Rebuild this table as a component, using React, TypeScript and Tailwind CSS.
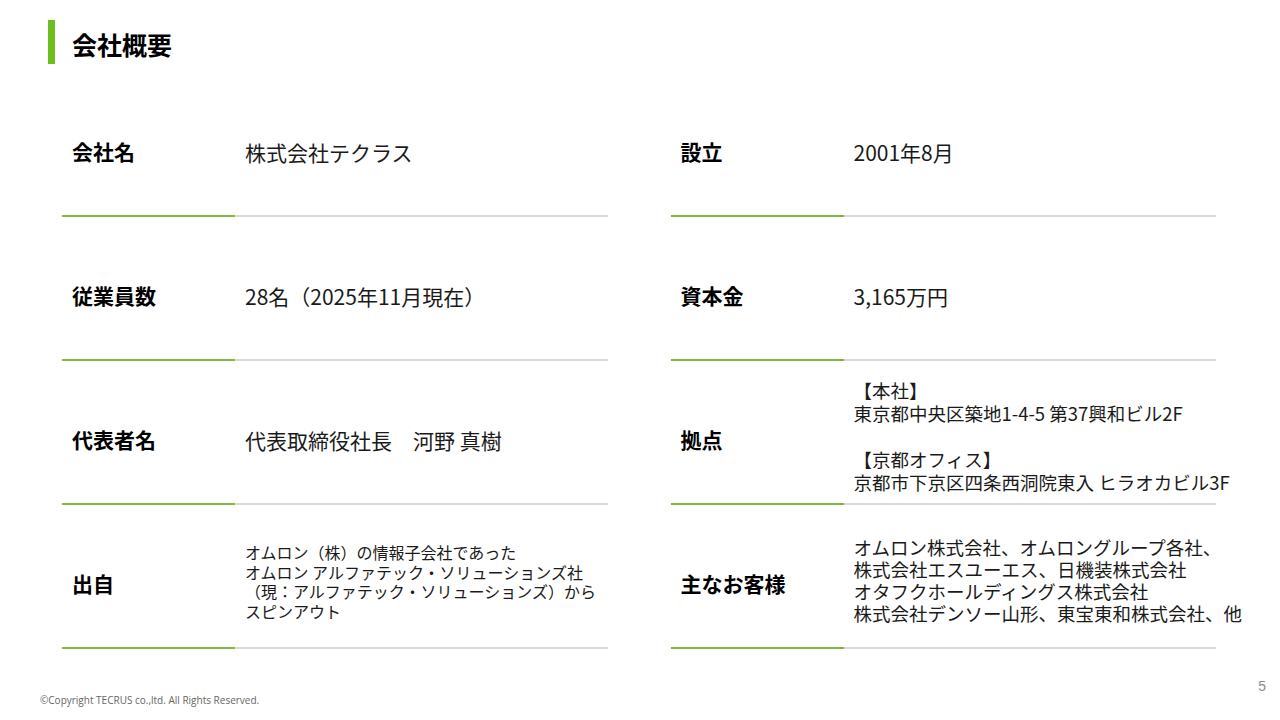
const FONT = "font-['Noto_Sans_CJK_JP',sans-serif]";

type Row = {
  label: string;
  value: React.ReactNode;
};

const leftRows: Row[] = [
  { label: "会社名", value: <p className="text-[21px] leading-[26px]">株式会社テクラス</p> },
  { label: "従業員数", value: <p className="text-[21px] leading-[26px]">28名（2025年11月現在）</p> },
  { label: "代表者名", value: <p className="text-[21px] leading-[26px]">代表取締役社長　河野 真樹</p> },
  {
    label: "出自",
    value: (
      <p className="text-[16px] leading-[19.5px] -mt-[3px]">
        オムロン（株）の情報子会社であった
        <br />
        オムロン アルファテック・ソリューションズ社
        <br />
        （現：アルファテック・ソリューションズ）から
        <br />
        スピンアウト
      </p>
    ),
  },
];

const rightRows: Row[] = [
  { label: "設立", value: <p className="text-[21px] leading-[26px]">2001年8月</p> },
  { label: "資本金", value: <p className="text-[21px] leading-[26px]">3,165万円</p> },
  {
    label: "拠点",
    value: (
      <p className="text-[18.5px] leading-[23px] -mt-[6px]">
        【本社】
        <br />
        東京都中央区築地1-4-5 第37興和ビル2F
        <br />
        <br />
        【京都オフィス】
        <br />
        京都市下京区四条西洞院東入 ヒラオカビル3F
      </p>
    ),
  },
  {
    label: "主なお客様",
    value: (
      <p className="text-[18.5px] leading-[22px] -mt-[7px]">
        オムロン株式会社、オムロングループ各社、
        <br />
        株式会社エスユーエス、日機装株式会社
        <br />
        オタフクホールディングス株式会社
        <br />
        株式会社デンソー山形、東宝東和株式会社、他
      </p>
    ),
  },
];

const InfoRow = ({ label, value, first }: Row & { first: boolean }) => (
  <div className={first ? "flex flex-col" : "flex flex-col mt-[16px]"}>
    <div className="h-[126px] flex items-center">
      <div className="w-[173px] shrink-0 pl-[10px] text-[21px] font-bold text-black">{label}</div>
      <div className="flex-1 min-w-0 pl-[10px] -mt-[1px] text-[#1a1a1a] whitespace-nowrap">{value}</div>
    </div>
    <div className="flex h-[2px]">
      <div className="w-[173px] shrink-0 bg-[#7cbb3c]" />
      <div className="flex-1 bg-[#d9d9d9]" />
    </div>
  </div>
);

const Column = ({ rows }: { rows: Row[] }) => (
  <div className="flex flex-col">
    {rows.map((r, i) => (
      <InfoRow key={r.label} {...r} first={i === 0} />
    ))}
  </div>
);

export default function App() {
  return (
    <div className={`w-[1280px] h-[720px] bg-white flex flex-col overflow-hidden ${FONT}`}>
      {/* Title */}
      <div className="flex items-center h-[44px] mt-[20px] pl-[48px]">
        <div className="w-[7px] h-[44px] bg-[#6cbf1e]" />
        <h1 className="ml-[17px] mt-[5px] text-[25px] font-bold text-black leading-none">会社概要</h1>
      </div>

      {/* Table */}
      <div className="grid grid-cols-2 gap-x-[63px] pl-[62px] pr-[64px] mt-[25px]">
        <Column rows={leftRows} />
        <Column rows={rightRows} />
      </div>

      {/* Footer */}
      <div className="flex justify-between mt-[28px]">
        <p className="pl-[40px] pt-[16px] text-[10px] text-[#666] font-['Open_Sans',sans-serif]">
          ©Copyright TECRUS co.,ltd. All Rights Reserved.
        </p>
        <p className="pr-[14px] text-[14px] leading-[18px] text-[#8c8c8c] font-['Liberation_Sans',sans-serif]">5</p>
      </div>
    </div>
  );
}
